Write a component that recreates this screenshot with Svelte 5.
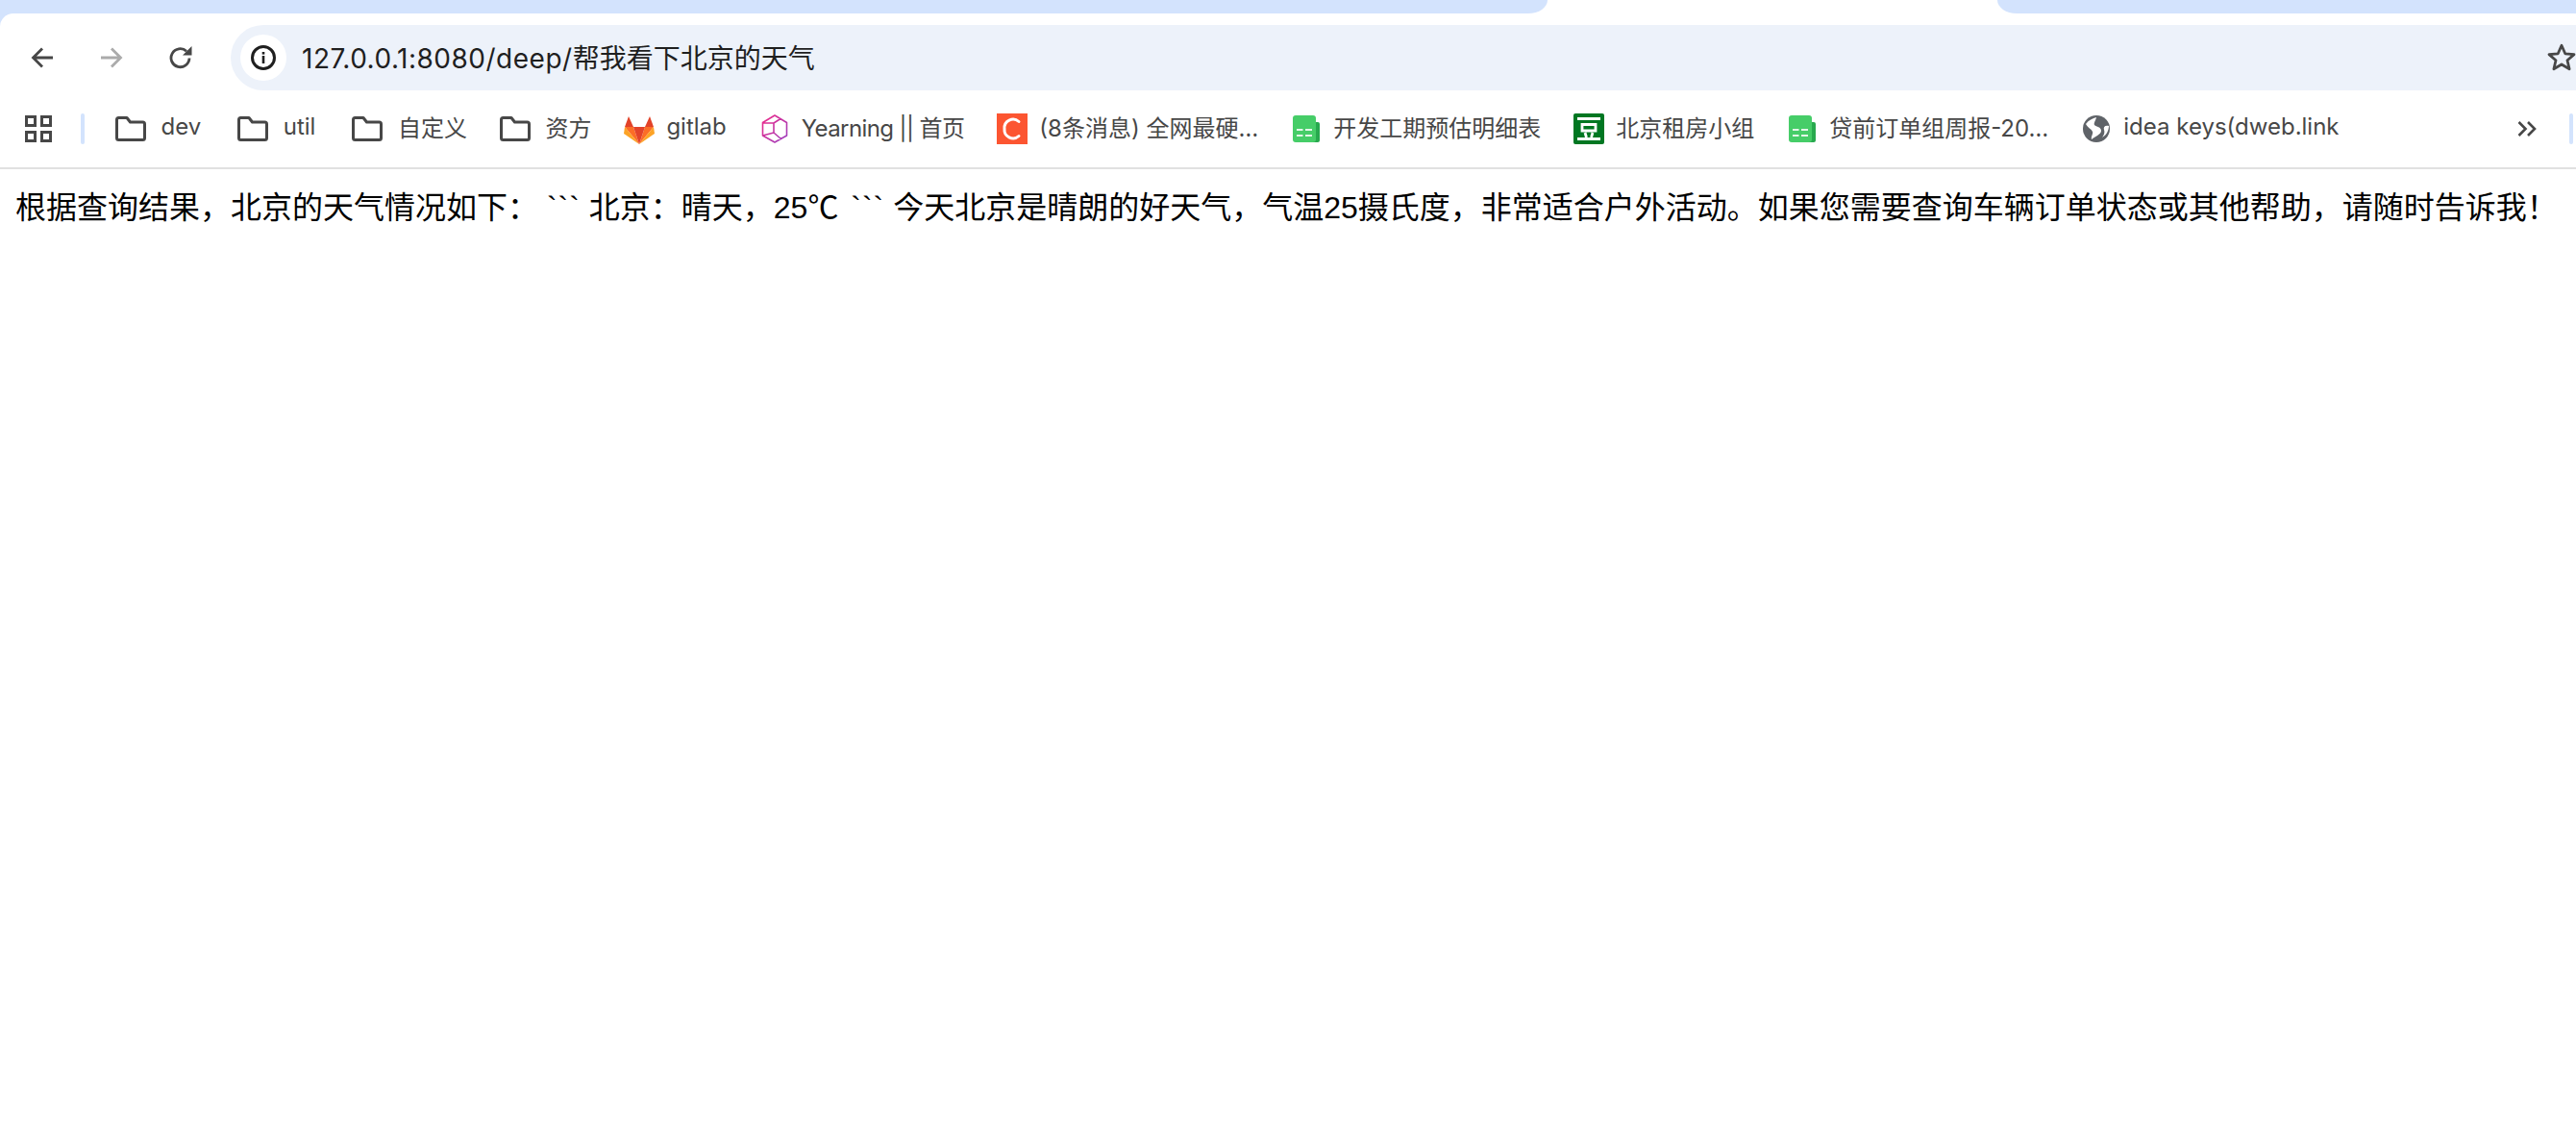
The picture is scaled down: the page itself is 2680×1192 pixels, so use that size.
<script>
  const bookmarks = [
    { kind: 'folder', label: 'dev', pad: true },
    { kind: 'folder', label: 'util', pad: true },
    { kind: 'folder', label: '自定义' },
    { kind: 'folder', label: '资方' },
    { kind: 'gitlab', label: 'gitlab' },
    { kind: 'yearning', label: 'Yearning || 首页', tight: true },
    { kind: 'csdn', label: '(8条消息) 全网最硬…' },
    { kind: 'sheet', label: '开发工期预估明细表' },
    { kind: 'douban', label: '北京租房小组' },
    { kind: 'sheet', label: '贷前订单组周报-20…' },
    { kind: 'globe', label: 'idea keys(dweb.link' }
  ];
</script>

<div class="chrome">
  <div class="tabs">
    <div class="tab left"></div>
    <div class="tab active"></div>
    <div class="tab right"></div>
  </div>

  <div class="toolbar">
    <svg class="nav" viewBox="0 0 24 24"><path d="M23 12H3M12 2.500 2.500 12l9.500 9.500" /></svg>
    <svg class="nav off" viewBox="0 0 24 24"><path d="M1 12h20M12 2.500l9.500 9.500-9.500 9.500" /></svg>
    <svg class="nav" viewBox="0 0 24 24">
      <path d="M21 12.500A9.500 9.500 0 1 1 18 5.300" />
      <path class="solid" d="M23.500 0v9.500H14z" />
    </svg>

    <div class="omnibox">
      <span class="badge">
        <svg width="26" height="26" viewBox="0 0 26 26">
          <circle cx="13" cy="13" r="11.500" fill="none" stroke="#1f1f1f" stroke-width="3" />
          <rect x="11.700" y="11" width="2.600" height="8" fill="#1f1f1f" />
          <rect x="11.700" y="7" width="2.600" height="2.600" fill="#1f1f1f" />
        </svg>
      </span>
      <span class="url"><span class="host">127.0.0.1:8080/deep/</span>帮我看下北京的天气</span>
      <svg class="star" width="32" height="30" viewBox="0 0 30 28">
        <path d="M15 3l3.500 8 8.700.8-6.600 5.700 2 8.500L15 21.500 7.400 26l2-8.500L2.800 11.800l8.700-.8z" fill="none" stroke="#474747" stroke-width="2.600" stroke-linejoin="round" />
      </svg>
    </div>
  </div>

  <div class="bookmarks">
    <svg class="apps" width="28" height="28" viewBox="0 0 28 28">
      <path d="M1.500 1.500h9v9h-9zM17.500 1.500h9v9h-9zM1.500 17.500h9v9h-9zM17.500 17.500h9v9h-9z" />
    </svg>
    <span class="sep"></span>

    <div class="items">
      {#each bookmarks as b}
        <div class="item" class:is-folder={b.kind === 'folder'} class:pad={b.pad} class:tight={b.tight}>
          <svg class="fav" width="32" height="32" viewBox="0 0 32 32">
            {#if b.kind === 'folder'}
              <path d="M1.500 7v18.500q0 2 2 2h25q2 0 2-2V11q0-2-2-2H15.500l-3.500-4.500H3.500q-2 0-2 2z" fill="none" stroke="#474747" stroke-width="3" stroke-linejoin="round" />
            {:else if b.kind === 'gitlab'}
              <path d="M5 3l5 11H1z" fill="#e24329" />
              <path d="M27 3l-5 11h9z" fill="#e24329" />
              <path d="M1 14h9l6 18z" fill="#fc6d26" />
              <path d="M31 14h-9l-6 18z" fill="#fc6d26" />
              <path d="M1 14l-1 7 16 11z" fill="#fca326" />
              <path d="M31 14l1 7-16 11z" fill="#fca326" />
              <path d="M10 14h12l-6 18z" fill="#e24329" />
            {:else if b.kind === 'yearning'}
              <defs>
                <linearGradient id="yearning-grad" x1="0" y1="0" x2="1" y2="1">
                  <stop offset="0" stop-color="#f02a88" />
                  <stop offset="1" stop-color="#9a40c0" />
                </linearGradient>
              </defs>
              <path d="M16 2l12.500 7.500V23L16 30 3.500 23V9.500zM3.500 10H15v10L3.500 23M15 10l7-4.500M15 20l7.500 6.500" fill="none" stroke="url(#yearning-grad)" stroke-width="1.600" stroke-linejoin="round" />
            {:else if b.kind === 'csdn'}
              <rect width="32" height="32" fill="#fc5531" />
              <path d="M23 8.500A9 9 0 0 0 8 16a9 9 0 0 0 15 7.500" fill="none" stroke="#fff" stroke-width="3" stroke-linecap="round" />
            {:else if b.kind === 'sheet'}
              <rect x="20" y="9" width="10" height="21" rx="2" fill="#28a94e" />
              <rect x="2" y="2" width="24" height="28" rx="3" fill="#46cd68" />
              <path d="M6 17h6.500M15 17h7M6 23h6.500M15 23h7" stroke="#fff" stroke-width="2" opacity="0.85" />
            {:else if b.kind === 'douban'}
              <rect width="32" height="32" rx="2" fill="#007722" />
              <path d="M4 5.500h24M9 11.500h14v6.500H9zM12 20l1.500 5M20 20l-1.500 5M4 26.500h24" fill="none" stroke="#fff" stroke-width="2.800" />
            {:else if b.kind === 'globe'}
              <circle cx="16" cy="16" r="14" fill="#5f6368" />
              <path d="M5 11C8 7 12 5 16 4c-1 4-3 6-2 8 2 2 7 2 7 6 0 4-7 6-10 9-1-3 2-6 1-8-1-3-5-4-7-8z" fill="#fff" />
              <path d="M29 13c-4-1-6 1-5 4 1 3 0 5-2 8 4-2 7-7 7-12z" fill="#fff" />
            {/if}
          </svg>
          <span class="label">{b.label}</span>
        </div>
      {/each}
    </div>

    <svg class="more" width="20" height="16" viewBox="0 0 20 16">
      <path d="M1.500 1l7 7-7 7M11 1l7 7-7 7" />
    </svg>
    <span class="sep last"></span>
  </div>
</div>

<main class="page">根据查询结果，北京的天气情况如下： <span class="ticks">```</span> 北京：晴天，25<span class="cjk">℃</span> <span class="ticks">```</span> 今天北京是晴朗的好天气，气温25摄氏度，非常适合户外活动。如果您需要查询车辆订单状态或其他帮助，请随时告诉我！</main>

<style>
  :global(body) {
    background: #fff;
    overflow: hidden;
  }
  .chrome {
    width: 2680px;
    overflow: hidden;
    background: linear-gradient(#d3e3fd 30px, #fff 30px);
    border-bottom: 2px solid #e1e1e1;
    font-family: Inter, "Noto Sans CJK SC", sans-serif;
  }
  .tabs {
    display: flex;
    height: 14px;
    background: #fff;
  }
  .tab {
    background: #d3e3fd;
  }
  .tab.left {
    width: 1610px;
    border-bottom-right-radius: 20px 14px;
  }
  .tab.active {
    width: 468px;
    background: #fff;
  }
  .tab.right {
    flex: 1;
    border-bottom-left-radius: 20px 14px;
  }
  .toolbar {
    display: flex;
    align-items: center;
    gap: 48px;
    height: 88px;
    padding: 12px 0 8px 32px;
    box-sizing: border-box;
    background: #fff;
    border-top-left-radius: 14px;
  }
  .nav {
    width: 24px;
    height: 24px;
    flex: none;
    fill: none;
    stroke: #474747;
    stroke-width: 2.800;
  }
  .nav.off {
    stroke: #ababab;
  }
  .nav .solid {
    fill: #474747;
    stroke: none;
  }
  .omnibox {
    flex: 1;
    display: flex;
    align-items: center;
    gap: 16px;
    height: 68px;
    margin-left: -8px;
    padding-left: 10px;
    background: #edf2fa;
    border-radius: 34px 0 0 34px;
  }
  .badge {
    width: 48px;
    height: 48px;
    display: flex;
    align-items: center;
    justify-content: center;
    background: #fff;
    border-radius: 50%;
  }
  .url {
    flex: 1;
    padding-bottom: 2px;
    font-size: 28px;
    color: #1f1f1f;
  }
  .host {
    letter-spacing: 0.5px;
  }
  .star {
    margin-bottom: 2px;
    margin-right: -1px;
  }
  .bookmarks {
    display: flex;
    align-items: center;
    height: 72px;
    padding: 0 3px 8px 26px;
    box-sizing: border-box;
    background: #fff;
  }
  .apps {
    flex: none;
    fill: none;
    stroke: #474747;
    stroke-width: 3;
  }
  .sep {
    flex: none;
    width: 4px;
    height: 32px;
    margin-left: 30px;
    background: #d3e3fd;
    border-radius: 2px;
  }
  .sep.last {
    margin-left: 34px;
  }
  .items {
    flex: 1;
    display: flex;
    gap: 34px;
    margin-left: 32px;
    font-size: 24px;
    color: #474747;
    white-space: nowrap;
  }
  .item {
    display: flex;
    align-items: center;
    gap: 12px;
  }
  .item.is-folder {
    gap: 15.500px;
  }
  .item.pad {
    padding-right: 4px;
  }
  .item.tight {
    letter-spacing: -0.6px;
  }
  .label {
    padding-bottom: 5px;
  }
  .fav {
    flex: none;
  }
  .more {
    flex: none;
    fill: none;
    stroke: #474747;
    stroke-width: 2.600;
  }
  .page {
    display: block;
    padding: 15px 16px;
    font-family: "Liberation Sans", "Noto Sans CJK SC", sans-serif;
    font-size: 32px;
    line-height: 44px;
    color: #000;
    white-space: nowrap;
  }
  .ticks {
    letter-spacing: 1px;
  }
  .cjk {
    font-family: "Noto Sans CJK SC", sans-serif;
    letter-spacing: 4px;
  }
</style>
